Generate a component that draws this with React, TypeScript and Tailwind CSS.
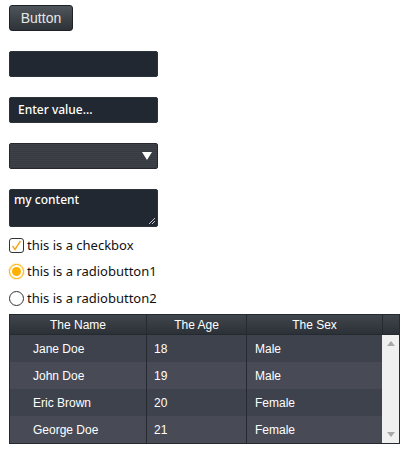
import React from 'react'

const rows = [
  { name: 'Jane Doe', age: 18, sex: 'Male' },
  { name: 'John Doe', age: 19, sex: 'Male' },
  { name: 'Eric Brown', age: 20, sex: 'Female' },
  { name: 'George Doe', age: 21, sex: 'Female' },
]

export default function App() {
  return (
    <div className="w-[408px] h-[456px] bg-white flex flex-col items-start pl-[9px] pt-[5px] font-['Noto_Sans',sans-serif]">
      {/* Button */}
      <button className="w-[64px] h-[26px] rounded-[3px] border border-[#1e2226] bg-gradient-to-b from-[#50555b] to-[#2e3338] text-[14px] text-[#e6e6e6] font-['Liberation_Sans',sans-serif] leading-none">
        Button
      </button>

      {/* Empty input */}
      <div className="mt-[20px] w-[149px] h-[26px] rounded-[2px] border border-[#2c333b] bg-[#222831]" />

      {/* Placeholder input */}
      <div className="mt-[20px] w-[149px] h-[26px] rounded-[2px] border border-[#2c333b] bg-[#222831] flex items-center pl-[8px] text-[12px] font-medium text-white">
        Enter value...
      </div>

      {/* Select */}
      <div className="mt-[20px] w-[149px] h-[26px] rounded-[2px] border border-[#25292e] bg-[repeating-linear-gradient(180deg,#3d4248_0px,#3d4248_1px,#373b41_1px,#373b41_2px)] flex items-center justify-end pr-[5px]">
        <svg width="10" height="8" viewBox="0 0 10 8"><path d="M0 0h10L5 8z" fill="#fff" /></svg>
      </div>

      {/* Textarea */}
      <div className="relative mt-[20px] w-[149px] h-[38px] rounded-[2px] border border-[#2c333b] bg-[#222831] pl-[4px] pt-[2px] text-[12px] font-medium text-white leading-[16px]">
        my content
        <svg className="absolute right-[1px] bottom-[1px]" width="8" height="8" viewBox="0 0 8 8">
          <path d="M7 1L1 7M7 4L4 7" stroke="#c8c8c8" strokeWidth="1" />
        </svg>
      </div>

      {/* Checkbox */}
      <div className="mt-[10px] flex items-center h-[16px] text-[13px] text-[#111] leading-none">
        <span className="w-[15px] h-[15px] rounded-[3px] border border-[#333] flex items-center justify-center">
          <svg width="11" height="11" viewBox="0 0 11 11"><path d="M1.5 6l2.5 3.5L9.5 1" fill="none" stroke="#f5a623" strokeWidth="1.4" /></svg>
        </span>
        <span className="ml-[3px]">this is a checkbox</span>
      </div>

      {/* Radio 1 */}
      <div className="mt-[10px] flex items-center h-[16px] text-[13px] text-[#111] leading-none">
        <span className="w-[15px] h-[15px] rounded-full border-[1.5px] border-[#ffb000] bg-white shadow-[0_0_2px_#ffc640] flex items-center justify-center">
          <span className="w-[9px] h-[9px] rounded-full bg-[#ffb000]" />
        </span>
        <span className="ml-[3px]">this is a radiobutton1</span>
      </div>

      {/* Radio 2 */}
      <div className="mt-[11px] flex items-center h-[16px] text-[13px] text-[#111] leading-none">
        <span className="w-[15px] h-[15px] rounded-full border border-[#333] bg-white" />
        <span className="ml-[3px]">this is a radiobutton2</span>
      </div>

      {/* Table */}
      <div className="mt-[8px] w-[391px] border border-[#252a30] font-['Liberation_Sans',sans-serif] text-[12px]">
        <div className="flex h-[20px] bg-gradient-to-b from-[#41464d] to-[#2c3137] border-b border-[#252a30] text-white">
          <div className="w-[137px] flex items-center justify-center border-r border-[#252a30]">The Name</div>
          <div className="w-[100px] flex items-center justify-center border-r border-[#252a30]">The Age</div>
          <div className="w-[136px] flex items-center justify-center border-r border-[#252a30]">The Sex</div>
          <div className="flex-1" />
        </div>
        <div className="flex">
          <div className="flex-1 flex flex-col">
            {rows.map((r, i) => (
              <div key={r.name} className={`flex h-[27px] text-white ${i % 2 === 0 ? 'bg-[#3e424c]' : 'bg-[#484b56]'}`}>
                <div className="w-[137px] flex items-center pl-[23px] border-r border-[#252a30]">{r.name}</div>
                <div className="w-[100px] flex items-center pl-[7px] border-r border-[#252a30]">{r.age}</div>
                <div className="flex-1 flex items-center pl-[8px]">{r.sex}</div>
              </div>
            ))}
          </div>
          <div className="w-[17px] bg-[#f0f0f0] flex flex-col items-center justify-between py-[6px]">
            <svg width="8" height="5" viewBox="0 0 8 5"><path d="M0 5h8L4 0z" fill="#a8a8a8" /></svg>
            <svg width="8" height="5" viewBox="0 0 8 5"><path d="M0 0h8L4 5z" fill="#a8a8a8" /></svg>
          </div>
        </div>
      </div>
    </div>
  )
}
